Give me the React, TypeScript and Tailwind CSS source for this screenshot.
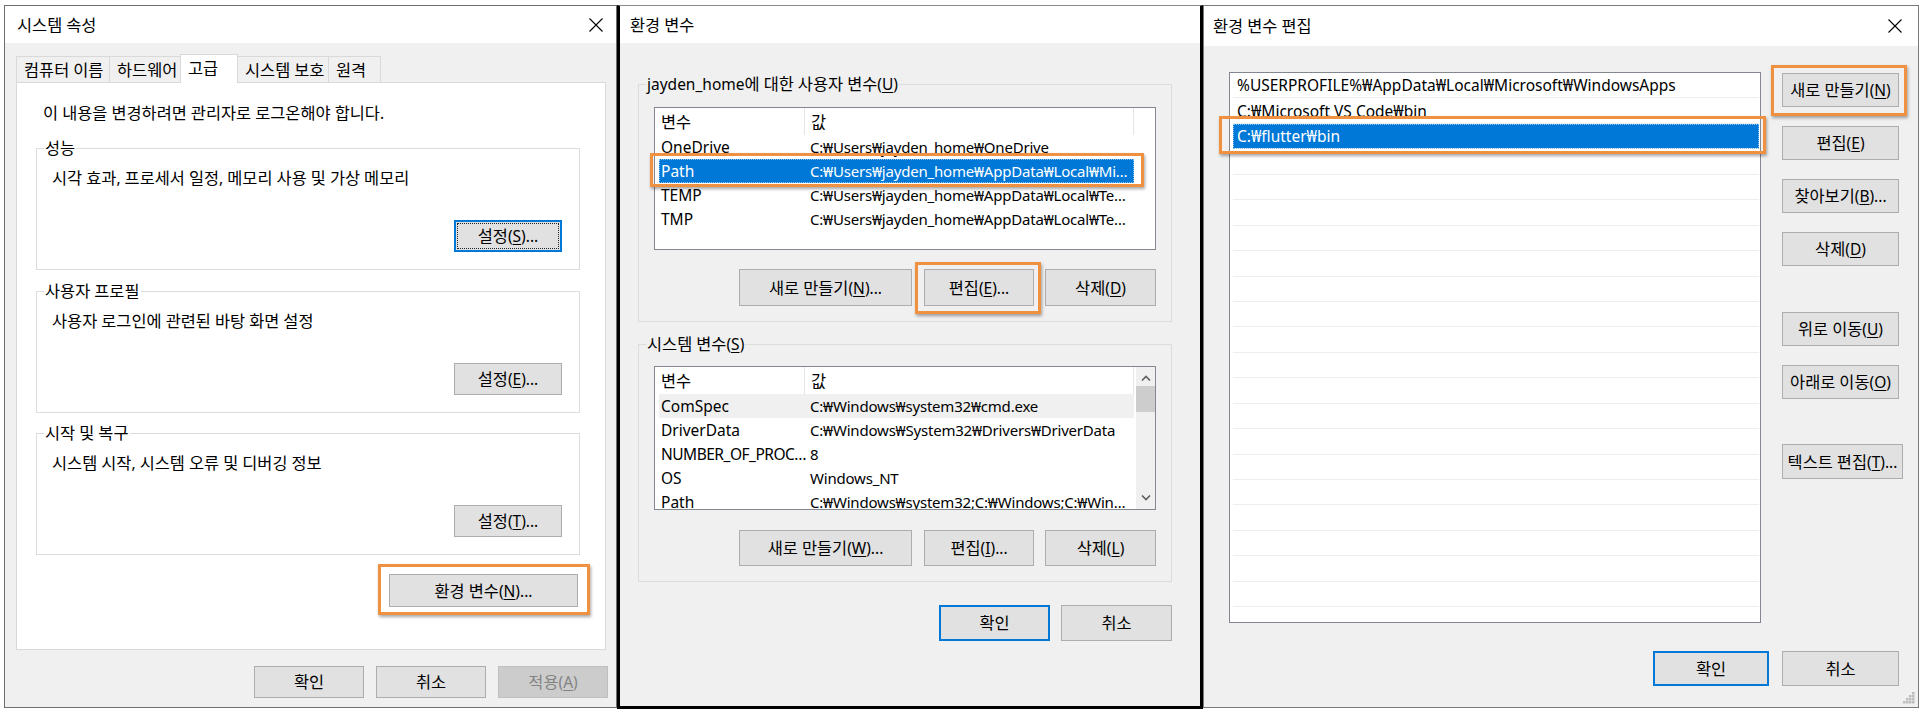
import React from "react";

const cx = (...a: (string | false | undefined | null)[]) => a.filter(Boolean).join(" ");

function CloseX() {
  return (
    <svg width="14" height="14" viewBox="0 0 14 14" className="block">
      <path d="M0.5 0.5 L13.5 13.5 M13.5 0.5 L0.5 13.5" stroke="#000" strokeWidth="1.1" fill="none" />
    </svg>
  );
}

function U({ c }: { c: string }) {
  return <span className="underline underline-offset-[2px] decoration-1">{c}</span>;
}

/* text helper: Hangul runs slightly larger (Malgun Gothic proportions), &X = mnemonic underline */
function L({ s }: { s: string }) {
  const parts = s.split(/(&.|[\u3131-\u318E\uAC00-\uD7A3]+)/);
  return (
    <span className="whitespace-pre">
      {parts.map((p, i) => {
        if (!p) return null;
        if (p[0] === "&" && p.length === 2) return <U key={i} c={p[1]} />;
        if (/[\uAC00-\uD7A3\u3131-\u318E]/.test(p))
          return (
            <span key={i} className="text-[16.4px]">
              {p}
            </span>
          );
        return <React.Fragment key={i}>{p}</React.Fragment>;
      })}
    </span>
  );
}

function Btn({
  className,
  focus,
  dotted,
  disabled,
  s,
}: {
  className?: string;
  focus?: boolean;
  dotted?: boolean;
  disabled?: boolean;
  s: string;
}) {
  return (
    <div
      className={cx(
        "relative flex items-center justify-center whitespace-nowrap shrink-0",
        focus ? "border-2 border-[#0078d7]" : "border",
        disabled
          ? "bg-[#cccccc] border-[#bfbfbf] text-[#838383]"
          : cx("bg-[#e1e1e1] text-black", !focus && "border-[#adadad]"),
        className
      )}
    >
      {dotted && <span className="absolute inset-[1px] border border-dotted border-[#222]" />}
      <span className="relative">
        <L s={s} />
      </span>
    </div>
  );
}

function Orange({ className }: { className: string }) {
  return (
    <div
      className={cx(
        "absolute z-20 pointer-events-none border-[3px] border-[#ef9140] shadow-[1px_2px_3px_rgba(0,0,0,0.35)]",
        className
      )}
    />
  );
}

function Group({ label, children, className }: { label: string; children: React.ReactNode; className?: string }) {
  return (
    <fieldset className={cx("border border-[#dcdcdc] m-0 p-0 min-w-0", className)}>
      <legend className="ml-[7px] px-[1px] leading-[20px]">
        <L s={label} />
      </legend>
      {children}
    </fieldset>
  );
}

function Tab({ label, w, selected }: { label: string; w: string; selected?: boolean }) {
  return (
    <div
      className={cx(
        "flex items-center pl-[7px] border-t border-l border-r border-[#d9d9d9] -ml-px first:ml-0 whitespace-nowrap",
        w,
        selected ? "h-[29px] bg-white relative z-10 -mb-px pb-[3px]" : "h-[26px] bg-[#f0f0f0]"
      )}
    >
      <L s={label} />
    </div>
  );
}

function SystemProps() {
  return (
    <div className="w-[613px] h-[703px] border border-[#6e6e6e] bg-[#f0f0f0] flex flex-col shrink-0">
      <div className="h-[37px] bg-white flex items-center justify-between pl-[12px] pr-[13px]">
        <L s="시스템 속성" />
        <CloseX />
      </div>
      <div className="pl-[11px] pr-[8px] flex flex-col">
        <div className="flex items-end mt-[11px] h-[28px]">
          <Tab label="컴퓨터 이름" w="w-[94px]" />
          <Tab label="하드웨어" w="w-[72px]" />
          <Tab label="고급" w="w-[58px]" selected />
          <Tab label="시스템 보호" w="w-[92px]" />
          <Tab label="원격" w="w-[53px]" />
        </div>
        <div className="w-[590px] h-[568px] bg-white border border-[#d9d9d9] pl-[19px] pt-[20px] flex flex-col">
          <div className="ml-[7px] h-[20px] whitespace-nowrap">
            <L s="이 내용을 변경하려면 관리자로 로그온해야 합니다." />
          </div>
          <Group label="성능" className="w-[544px] mt-[15px]">
            <div className="h-[111px] flex flex-col pl-[15px] pr-[17px] pt-[10px] pb-[17px]">
              <div className="h-[20px] whitespace-nowrap">
                <L s="시각 효과, 프로세서 일정, 메모리 사용 및 가상 메모리" />
              </div>
              <div className="mt-auto flex justify-end">
                <Btn className="w-[108px] h-[32px]" focus dotted s="설정(&S)..." />
              </div>
            </div>
          </Group>
          <Group label="사용자 프로필" className="w-[544px] mt-[11px]">
            <div className="h-[111px] flex flex-col pl-[15px] pr-[17px] pt-[10px] pb-[17px]">
              <div className="h-[20px] whitespace-nowrap">
                <L s="사용자 로그인에 관련된 바탕 화면 설정" />
              </div>
              <div className="mt-auto flex justify-end">
                <Btn className="w-[108px] h-[32px]" s="설정(&E)..." />
              </div>
            </div>
          </Group>
          <Group label="시작 및 복구" className="w-[544px] mt-[10px]">
            <div className="h-[111px] flex flex-col pl-[15px] pr-[17px] pt-[10px] pb-[17px]">
              <div className="h-[20px] whitespace-nowrap">
                <L s="시스템 시작, 시스템 오류 및 디버깅 정보" />
              </div>
              <div className="mt-auto flex justify-end">
                <Btn className="w-[108px] h-[32px]" s="설정(&T)..." />
              </div>
            </div>
          </Group>
          <div className="w-[544px] flex justify-end mt-[19px] pr-[2px]">
            <div className="relative">
              <Btn className="w-[189px] h-[33px]" s="환경 변수(&N)..." />
              <Orange className="-left-[11px] -right-[12px] -top-[10px] -bottom-[8px]" />
            </div>
          </div>
        </div>
        <div className="flex justify-end gap-[12px] mt-[16px]">
          <Btn className="w-[110px] h-[32px]" s="확인" />
          <Btn className="w-[110px] h-[32px]" s="취소" />
          <Btn className="w-[110px] h-[32px]" disabled s="적용(&A)" />
        </div>
      </div>
    </div>
  );
}

type Row = { n: string; v: string; sel?: boolean; hover?: boolean; tight?: boolean };

function VarList({ rows, scroll, className }: { rows: Row[]; scroll?: boolean; className: string }) {
  return (
    <div className={cx("border border-[#828790] bg-white flex", scroll && "overflow-hidden", className)}>
      <div className="pl-[4px] w-[479px] flex flex-col">
        <div className="h-[27px] flex items-center shrink-0">
          <div className="w-[146px] h-full flex items-center pl-[2px] border-r border-[#e5e5e5]">
            <L s="변수" />
          </div>
          <div className="flex-1 h-full flex items-center pl-[6px] border-r border-[#e5e5e5]">
            <L s="값" />
          </div>
        </div>
        {rows.map((r, i) => (
          <div key={i} className="relative shrink-0">
            <div
              className={cx(
                "h-[24px] flex items-center whitespace-nowrap",
                r.sel && "bg-[#0078d7] text-white outline outline-1 outline-dotted outline-[#8fc0ea] -outline-offset-1",
                r.hover && "bg-[#f0f0f0]"
              )}
            >
              <div className={cx("w-[146px] shrink-0 pl-[2px]", r.tight && "tracking-[-0.5px]")}>{r.n}</div>
              <div className="w-[327px] shrink-0 pl-[5px] text-[15px] tracking-[-0.2px]">{r.v}</div>
            </div>
            {r.sel && <Orange className="-left-[9px] -right-[10px] -top-[6px] -bottom-[4px]" />}
          </div>
        ))}
      </div>
      {scroll && (
        <div className="ml-auto w-[19px] bg-[#f0f0f0] flex flex-col items-center">
          <svg width="10" height="6" viewBox="0 0 10 6" className="mt-[8px]">
            <path d="M1 5.5 L5 1.5 L9 5.5" stroke="#606060" strokeWidth="1.6" fill="none" />
          </svg>
          <div className="mt-[5px] w-[19px] h-[26px] bg-[#cdcdcd]" />
          <svg width="10" height="6" viewBox="0 0 10 6" className="mt-auto mb-[8px]">
            <path d="M1 0.5 L5 4.5 L9 0.5" stroke="#606060" strokeWidth="1.6" fill="none" />
          </svg>
        </div>
      )}
    </div>
  );
}

function EnvVars() {
  const userRows: Row[] = [
    { n: "OneDrive", v: "C:₩Users₩jayden_home₩OneDrive" },
    { n: "Path", v: "C:₩Users₩jayden_home₩AppData₩Local₩Mi…", sel: true },
    { n: "TEMP", v: "C:₩Users₩jayden_home₩AppData₩Local₩Te…" },
    { n: "TMP", v: "C:₩Users₩jayden_home₩AppData₩Local₩Te…" },
  ];
  const sysRows: Row[] = [
    { n: "ComSpec", v: "C:₩Windows₩system32₩cmd.exe", hover: true },
    { n: "DriverData", v: "C:₩Windows₩System32₩Drivers₩DriverData" },
    { n: "NUMBER_OF_PROC…", v: "8", tight: true },
    { n: "OS", v: "Windows_NT" },
    { n: "Path", v: "C:₩Windows₩system32;C:₩Windows;C:₩Win…" },
  ];
  return (
    <div className="w-[586px] h-[704px] border-x-[3px] border-b-[3px] border-t border-black border-t-[#8a8a8a] bg-[#f0f0f0] flex flex-col shrink-0">
      <div className="h-[37px] bg-white flex items-center pl-[10px]">
        <L s="환경 변수" />
      </div>
      <div className="pl-[18px] flex flex-col">
        <Group label="jayden_home에 대한 사용자 변수(&U)" className="w-[534px] mt-[31px]">
          <div className="pl-[15px] pt-[13px] pb-[15px]">
            <VarList rows={userRows} className="w-[502px] h-[143px]" />
            <div className="w-[502px] flex justify-end mt-[19px]">
              <Btn className="w-[173px] h-[37px]" s="새로 만들기(&N)..." />
              <div className="relative ml-[12px]">
                <Btn className="w-[110px] h-[37px]" s="편집(&E)..." />
                <Orange className="-left-[9px] -right-[7px] -top-[7px] -bottom-[8px]" />
              </div>
              <Btn className="w-[111px] h-[37px] ml-[11px]" s="삭제(&D)" />
            </div>
          </div>
        </Group>
        <Group label="시스템 변수(&S)" className="w-[534px] mt-[12px]">
          <div className="pl-[15px] pt-[12px] pb-[15px]">
            <VarList rows={sysRows} scroll className="w-[502px] h-[144px]" />
            <div className="w-[502px] flex justify-end mt-[20px]">
              <Btn className="w-[173px] h-[36px]" s="새로 만들기(&W)..." />
              <Btn className="w-[110px] h-[36px] ml-[12px]" s="편집(&I)..." />
              <Btn className="w-[111px] h-[36px] ml-[11px]" s="삭제(&L)" />
            </div>
          </div>
        </Group>
        <div className="w-[534px] flex justify-end gap-[11px] mt-[23px]">
          <Btn className="w-[111px] h-[36px]" focus s="확인" />
          <Btn className="w-[111px] h-[36px]" s="취소" />
        </div>
      </div>
    </div>
  );
}

function Grip() {
  return (
    <svg width="12" height="12" viewBox="0 0 12 12" className="absolute right-[3px] bottom-[3px]">
      {[
        [9, 0],
        [6, 3],
        [9, 3],
        [3, 6],
        [6, 6],
        [9, 6],
        [0, 9],
        [3, 9],
        [6, 9],
        [9, 9],
      ].map(([x, y], i) => (
        <rect key={i} x={x} y={y} width="2.5" height="2.5" fill="#bdbdbd" />
      ))}
    </svg>
  );
}

function EditEnv() {
  const items = [
    "%USERPROFILE%₩AppData₩Local₩Microsoft₩WindowsApps",
    "C:₩Microsoft VS Code₩bin",
    "C:₩flutter₩bin",
  ];
  const rows = Array.from({ length: 21 }, (_, i) => items[i] ?? "");
  return (
    <div className="relative w-[716px] h-[703px] border border-[#7a7a7a] bg-[#f0f0f0] flex flex-col shrink-0">
      <div className="h-[40px] bg-white flex items-center justify-between pl-[9px] pr-[16px]">
        <L s="환경 변수 편집" />
        <CloseX />
      </div>
      <div className="flex pl-[25px] mt-[26px]">
        <div className="w-[532px] h-[551px] border border-[#828790] bg-white flex flex-col pl-[3px] pr-[1px]">
          {rows.map((t, i) => (
            <div key={i} className="relative shrink-0">
              <div
                className={cx(
                  "h-[25.45px] flex items-center pl-[4px] border-b border-[#eeeeee] whitespace-nowrap",
                  i === 2 && "bg-[#0078d7] text-white border-[#0078d7] outline outline-1 outline-dotted outline-[#8fc0ea] -outline-offset-1"
                )}
              >
                {t}
              </div>
              {i === 2 && <Orange className="-left-[14px] -right-[7px] -top-[8px] -bottom-[5px]" />}
            </div>
          ))}
        </div>
        <div className="ml-[21px] mt-[1px] flex flex-col items-start">
          <div className="relative">
            <Btn className="w-[117px] h-[34px]" s="새로 만들기(&N)" />
            <Orange className="-left-[11px] -right-[8px] -top-[8px] -bottom-[9px]" />
          </div>
          <Btn className="w-[117px] h-[34px] mt-[19px]" s="편집(&E)" />
          <Btn className="w-[117px] h-[34px] mt-[19px]" s="찾아보기(&B)..." />
          <Btn className="w-[117px] h-[34px] mt-[19px]" s="삭제(&D)" />
          <Btn className="w-[117px] h-[34px] mt-[46px]" s="위로 이동(&U)" />
          <Btn className="w-[117px] h-[34px] mt-[19px]" s="아래로 이동(&O)" />
          <Btn className="w-[121px] h-[35px] mt-[45px]" s="텍스트 편집(&T)..." />
        </div>
      </div>
      <div className="flex justify-end gap-[13px] mt-[28px] pr-[19px]">
        <Btn className="w-[116px] h-[35px]" focus s="확인" />
        <Btn className="w-[117px] h-[35px]" s="취소" />
      </div>
      <Grip />
    </div>
  );
}

export default function App() {
  return (
    <div className="w-[1927px] h-[714px] bg-white flex items-start pt-[5px] pl-[4px] text-[15.5px] leading-[20px] text-black font-['Noto_Sans','Noto_Sans_CJK_KR',sans-serif] overflow-hidden">
      <SystemProps />
      <EnvVars />
      <EditEnv />
    </div>
  );
}
